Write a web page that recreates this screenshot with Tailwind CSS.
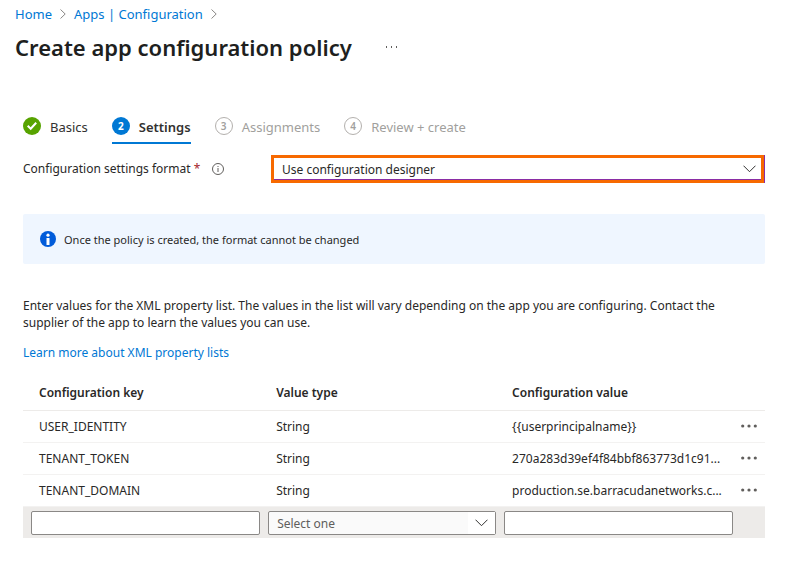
<!doctype html>
<html lang="en">

<head>
    <title>Create app configuration policy</title>
    <meta charset="utf-8">
    <meta name="viewport" content="width=device-width, initial-scale=1">
    <script src="https://cdn.jsdelivr.net/npm/@tailwindcss/browser@4"></script>
</head>

<body class="bg-white font-['Noto_Sans','Open_Sans',sans-serif] text-[12px] leading-[17px] text-[#292827]">

<header class="px-[15px] pt-[5px]">
    <nav aria-label="Breadcrumb" class="flex items-center gap-2 text-[13px] leading-[18px] text-[#0078d4]">
        <a href="#">Home</a>
        <svg class="h-[10px] w-[6px] text-[#8a8886]" viewBox="0 0 6 10" fill="none" stroke="currentColor"><path d="M.5.5 5.2 5 .5 9.5"/></svg>
        <a href="#">Apps | Configuration</a>
        <svg class="h-[10px] w-[6px] text-[#8a8886]" viewBox="0 0 6 10" fill="none" stroke="currentColor"><path d="M.5.5 5.2 5 .5 9.5"/></svg>
    </nav>
    <div class="mt-[8px] flex items-center gap-[34px]">
        <h1 class="text-[22px] leading-[32px] font-semibold text-[#201f1e]">Create app configuration policy</h1>
        <button type="button" aria-label="More actions" class="text-[#605e5c]">
            <svg class="h-[2px] w-[11px]" viewBox="0 0 11 2" fill="currentColor"><path d="M0 0h1v2H0zM5 0h1v2H5zM10 0h1v2h-1z"/></svg>
        </button>
    </div>
</header>

<main class="pr-[29px] pl-[23px]">
    <!-- Wizard steps -->
    <ol class="mt-[55px] flex gap-[24px] text-[13px] leading-[18px] text-[#a19f9d]">
        <li class="flex h-[26px] gap-[9px] text-[#323130]">
            <svg class="-mt-px h-[18px] w-[18px]" viewBox="0 0 18 18"><circle cx="9" cy="9" r="9" fill="#57a300"/><path d="m4.7 8.8 3 3 5.5-6" fill="none" stroke="#fff" stroke-width="2"/></svg>
            <a href="#">Basics</a>
        </li>
        <li class="flex h-[26px] gap-[9px] border-b-2 border-[#0078d4] font-semibold text-[#323130]" aria-current="step">
            <span class="-mt-px flex h-[18px] w-[18px] items-center justify-center rounded-full bg-[#0078d4] text-[10px] font-bold text-white">2</span>
            <a href="#">Settings</a>
        </li>
        <li class="flex h-[26px] gap-[9px]">
            <span class="-mt-px flex h-[18px] w-[18px] items-center justify-center rounded-full border border-[#b3b0ad] text-[10px] font-semibold">3</span>
            Assignments
        </li>
        <li class="flex h-[26px] gap-[9px]">
            <span class="-mt-px flex h-[18px] w-[18px] items-center justify-center rounded-full border border-[#b3b0ad] text-[10px] font-semibold">4</span>
            Review + create
        </li>
    </ol>

    <div class="mt-[11px] flex items-center">
        <div class="flex w-[248px] shrink-0 items-center">
            <label for="format" class="pb-0.5">Configuration settings format <span class="text-[#a4262c]">*</span></label>
            <svg class="ml-[12px] h-[12px] w-[12px] text-[#605e5c]" viewBox="0 0 12 12" fill="none" stroke="currentColor"><circle cx="6" cy="6" r="5.5"/><path d="M6 5v4M6 3v1"/></svg>
        </div>
        <div class="relative grow border-r border-[#8a2da5]">
            <div class="border-3 border-[#f76900]">
                <select id="format" class="block h-[22px] w-full appearance-none border-b border-[#8a2da5] bg-white px-2 pt-0.5 text-[12px] leading-[17px] text-[#292827]">
                    <option>Use configuration designer</option>
                </select>
            </div>
            <svg class="pointer-events-none absolute top-[10px] right-[8px] h-[8px] w-[13px] text-[#323130]" viewBox="0 0 13 8" fill="none" stroke="currentColor"><path d="M.5.7 6.5 6.7 12.5.7"/></svg>
        </div>
    </div>

    <div class="mt-[31px] flex h-[50px] items-center gap-2 rounded-xs bg-[#eff6ff] px-[17px]">
        <svg class="h-[16px] w-[16px]" viewBox="0 0 16 16"><circle cx="8" cy="8" r="8" fill="#015cda"/><path d="M6.5 7h3v7h-3z" fill="#fff"/><circle cx="8" cy="4.2" r="1.6" fill="#fff"/></svg>
        <p class="text-[11px]">Once the policy is created, the format cannot be changed</p>
    </div>

    <p class="mt-[33px] pr-[24px]">Enter values for the XML property list. The values in the list will vary depending on the app you are configuring. Contact the supplier of the app to learn the values you can use.</p>
    <p class="mt-[13px]"><a href="#" class="text-[#0078d4]">Learn more about XML property lists</a></p>

    <table class="mt-[14px] w-full table-fixed text-left">
        <thead>
            <tr class="h-[35px] border-b border-[#edebe9]">
                <th class="w-[32.5%] pl-4 font-semibold">Configuration key</th>
                <th class="w-[31.8%] pl-3 font-semibold">Value type</th>
                <th class="pl-3 font-semibold">Configuration value</th>
                <th class="w-7"></th>
            </tr>
        </thead>
        <tbody>
            <tr class="h-[32px] border-b border-[#f3f2f1]">
                <td class="pl-4">USER_IDENTITY</td>
                <td class="pl-3">String</td>
                <td class="truncate pl-3">{{userprincipalname}}</td>
                <td>
                    <button type="button" aria-label="Row actions" class="block px-1 text-[#605e5c]">
                        <svg class="h-[4px] w-[16px]" viewBox="0 0 16 4" fill="currentColor"><circle cx="1.7" cy="2" r="1.6"/><circle cx="8" cy="2" r="1.6"/><circle cx="14.3" cy="2" r="1.6"/></svg>
                    </button>
                </td>
            </tr>
            <tr class="h-[32px] border-b border-[#f3f2f1]">
                <td class="pl-4">TENANT_TOKEN</td>
                <td class="pl-3">String</td>
                <td class="truncate pl-3">270a283d39ef4f84bbf863773d1c91...</td>
                <td>
                    <button type="button" aria-label="Row actions" class="block px-1 text-[#605e5c]">
                        <svg class="h-[4px] w-[16px]" viewBox="0 0 16 4" fill="currentColor"><circle cx="1.7" cy="2" r="1.6"/><circle cx="8" cy="2" r="1.6"/><circle cx="14.3" cy="2" r="1.6"/></svg>
                    </button>
                </td>
            </tr>
            <tr class="h-[32px] border-b border-[#f3f2f1]">
                <td class="pl-4">TENANT_DOMAIN</td>
                <td class="pl-3">String</td>
                <td class="truncate pl-3">production.se.barracudanetworks.c...</td>
                <td>
                    <button type="button" aria-label="Row actions" class="block px-1 text-[#605e5c]">
                        <svg class="h-[4px] w-[16px]" viewBox="0 0 16 4" fill="currentColor"><circle cx="1.7" cy="2" r="1.6"/><circle cx="8" cy="2" r="1.6"/><circle cx="14.3" cy="2" r="1.6"/></svg>
                    </button>
                </td>
            </tr>
            <tr class="h-[32px] bg-[#edebe9]">
                <td class="pt-px pr-1 pl-2"><input type="text" aria-label="Configuration key" class="block h-[24px] w-full rounded-xs border border-[#8a8886] bg-white px-2"></td>
                <td class="px-1 pt-px">
                    <div class="relative">
                        <select aria-label="Value type" class="block h-[24px] w-full appearance-none rounded-xs border border-[#8a8886] bg-[#fafafa] px-2 pt-0.5 text-[12px] leading-[17px] text-[#605e5c]">
                            <option>Select one</option>
                        </select>
                        <span class="pointer-events-none absolute inset-y-px right-px flex w-[27px] items-center justify-center bg-white text-[#323130]">
                            <svg class="h-[8px] w-[13px]" viewBox="0 0 13 8" fill="none" stroke="currentColor"><path d="M.5.7 6.5 6.7 12.5.7"/></svg>
                        </span>
                    </div>
                </td>
                <td class="px-1 pt-px"><input type="text" aria-label="Configuration value" class="block h-[24px] w-full rounded-xs border border-[#8a8886] bg-white px-2"></td>
                <td></td>
            </tr>
        </tbody>
    </table>
</main>
</body>

</html>
